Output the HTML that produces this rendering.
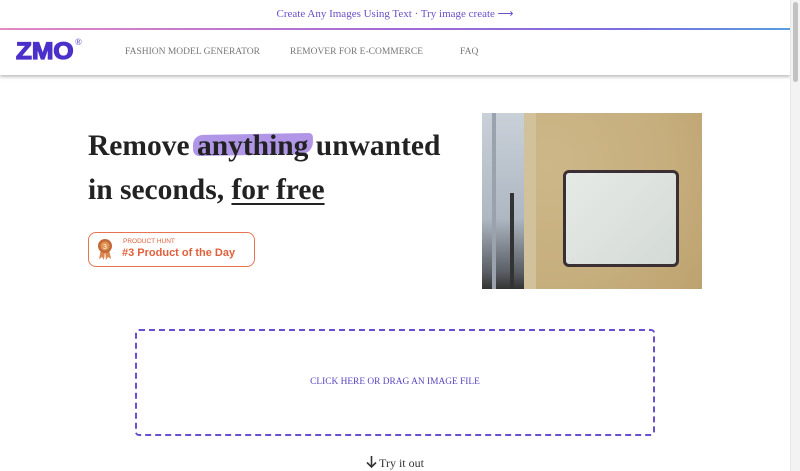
<!DOCTYPE html>
<html><head><style>
*{margin:0;padding:0;box-sizing:border-box}
body{width:800px;height:471px;overflow:hidden;background:#fff;position:relative;font-family:"Liberation Serif",serif}
.abs{position:absolute}
</style></head><body>
<div class="abs" style="left:0;top:0;width:790px;height:29px;text-align:center;line-height:29px;font-size:11px;color:#6a4fc8">Create Any Images Using Text · Try image create ⟶</div>
<div class="abs" style="left:0;top:28px;width:790px;height:2px;background:linear-gradient(90deg,#e58ac6,#a56bd8 50%,#7a6fe0 80%,#5aa0e0)"></div>
<div class="abs" style="left:0;top:30px;width:790px;height:45px;background:#fff;box-shadow:0 2px 3px rgba(0,0,0,.25)"></div>
<div class="abs" style="left:16px;top:38px;font-family:'Liberation Sans',sans-serif;font-weight:900;font-size:24px;color:#4b30c9;-webkit-text-stroke:1.3px #4b30c9;transform:scaleX(1.08);transform-origin:left">ZMO</div>
<div class="abs" style="left:75px;top:37px;font-size:9px;color:#4b30c9">®</div>
<div class="abs" style="left:125px;top:47px;font-size:9.5px;color:#777">FASHION MODEL GENERATOR</div>
<div class="abs" style="left:290px;top:47px;font-size:9.5px;color:#777">REMOVER FOR E-COMMERCE</div>
<div class="abs" style="left:460px;top:47px;font-size:9.5px;color:#777">FAQ</div>
<div class="abs" style="left:790px;top:0;width:10px;height:471px;background:#f3f3f3;border-left:1px solid #e6e6e6"></div>
<div class="abs" style="left:793px;top:2px;width:5px;height:80px;background:#c2c2c2;border-radius:3px"></div>

<div class="abs" style="left:193px;top:134px;width:120px;height:21px;background:#a98be6;border-radius:10px 4px 12px 6px;transform:rotate(-1deg);opacity:.9"></div>
<div class="abs" style="left:88px;top:124px;font-size:29.5px;font-weight:bold;color:#222;line-height:44px;white-space:nowrap">Remove anything unwanted<br>in seconds, <span style="text-decoration:underline;text-decoration-thickness:2px;text-underline-offset:4px">for free</span></div>

<div class="abs" style="left:88px;top:232px;width:167px;height:35px;border:1px solid #e7744f;border-radius:8px"></div>
<svg class="abs" style="left:96px;top:237px" width="18" height="24" viewBox="0 0 18 24"><path d="M5 12 L3 22 L6 20 L8 23 L9 14Z M13 12 L15 22 L12 20 L10 23 L9 14Z" fill="#d9874e"/><circle cx="9" cy="9" r="7" fill="#c2693a"/><circle cx="9" cy="9" r="4.5" fill="#e0924f"/><text x="9" y="12" font-size="7" text-anchor="middle" fill="#fff" font-family="Liberation Sans">3</text></svg>
<div class="abs" style="left:123px;top:238px;font-family:'Liberation Sans',sans-serif;font-size:6.5px;color:#e0603c">PRODUCT HUNT</div>
<div class="abs" style="left:122px;top:247px;font-family:'Liberation Sans',sans-serif;font-size:11px;font-weight:bold;color:#e0603c">#3 Product of the Day</div>

<div class="abs" style="left:482px;top:113px;width:220px;height:176px;background:radial-gradient(circle at 30% 30%,#cdb789,#c6ae7d 60%,#bca26e);overflow:hidden">
<div class="abs" style="left:0;top:0;width:42px;height:176px;background:linear-gradient(180deg,#c9d0d8,#aeb7c2 60%,#5b5f66 90%,#333)"></div>
<div class="abs" style="left:10px;top:0;width:4px;height:176px;background:#9aa3ad"></div>
<div class="abs" style="left:28px;top:80px;width:4px;height:96px;background:#333"></div>
<div class="abs" style="left:42px;top:0;width:12px;height:176px;background:#d2c29c"></div>
<div class="abs" style="left:81px;top:57px;width:116px;height:97px;border:3px solid #3a3033;border-radius:6px;background:linear-gradient(135deg,#e6eae6,#d4dad6)"></div>
</div>

<div class="abs" style="left:135px;top:329px;width:520px;height:107px;border:2.5px dashed #6a4fcf;border-radius:4px"></div>
<div class="abs" style="left:135px;top:377px;width:520px;text-align:center;font-size:9.4px;color:#5a44c2">CLICK HERE OR DRAG AN IMAGE FILE</div>
<div class="abs" style="left:0;top:456px;width:790px;text-align:center;font-size:12px;color:#333"><svg width="11" height="12" viewBox="0 0 11 12" style="vertical-align:-1px;margin-right:2px"><path d="M5.5 0V11M1 6.5L5.5 11L10 6.5" stroke="#333" stroke-width="1.6" fill="none"/></svg>Try it out</div>
</body></html>
